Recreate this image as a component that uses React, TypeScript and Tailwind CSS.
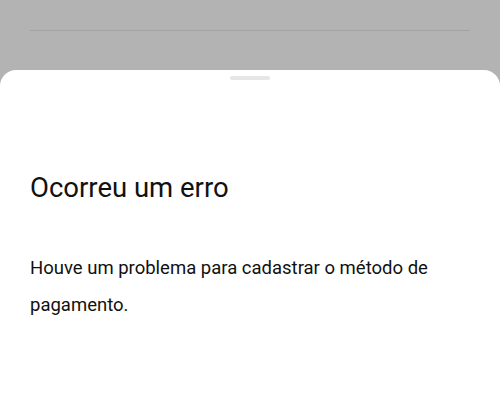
export default function App() {
  return (
    <div
      className="relative h-[411px] w-[500px] overflow-hidden bg-[#b3b3b3]"
      style={{ fontFamily: 'Roboto, "Noto Sans", sans-serif' }}
    >
      {/* page behind the sheet */}
      <div className="px-[30px] pt-[30px]">
        <div className="h-px bg-[#a3a3a3]" />
      </div>

      {/* bottom sheet */}
      <div className="mt-[39px] h-[400px] rounded-t-[16px] bg-white">
        <div className="flex justify-center pt-[6px]">
          <div className="h-[4px] w-[40px] rounded-full bg-[#e6e6e6]" />
        </div>
        <div className="px-[30px] pt-[90px] text-[#111]">
          <h2 className="text-[27.5px] leading-[36px]">Ocorreu um erro</h2>
          <p className="mt-[44px] text-[18.5px] leading-[37px]">
            Houve um problema para cadastrar o método de pagamento.
          </p>
        </div>
      </div>
    </div>
  );
}
